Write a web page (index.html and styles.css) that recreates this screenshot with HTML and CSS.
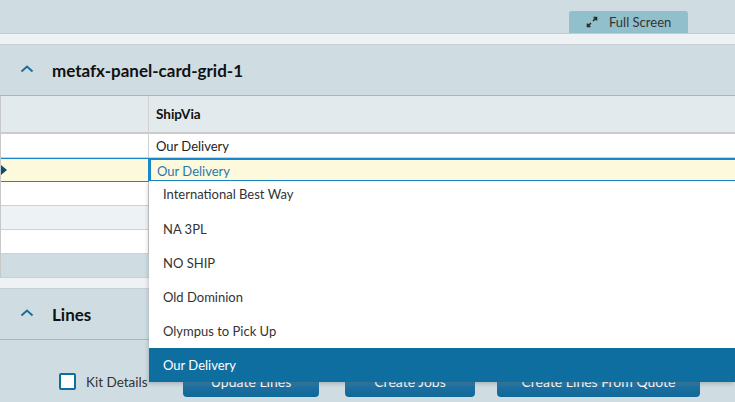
FILE: index.html
```html
<!DOCTYPE html>
<html>
<head>
<meta charset="utf-8">
<link rel="stylesheet" href="styles.css">
</head>
<body>
<div class="page">
  <div class="topbar">
    <div class="fs-btn">
      <svg class="fs-icon" width="12" height="12" viewBox="0 0 12 12">
        <path d="M7 5 L10.5 1.5 M7.5 1.5 H10.5 V4.5" fill="none" stroke="#2b2b2b" stroke-width="1.6"/>
        <path d="M5 7 L1.5 10.5 M1.5 7.5 V10.5 H4.5" fill="none" stroke="#2b2b2b" stroke-width="1.6"/>
      </svg>
      <span>Full Screen</span>
    </div>
  </div>
  <div class="strip"></div>

  <div class="panel-head">
    <svg class="chev" width="14" height="8" viewBox="0 0 14 8"><polyline points="1.5,6.5 7,1.5 12.5,6.5" fill="none" stroke="#1c6e9c" stroke-width="2"/></svg>
    <span class="title">metafx-panel-card-grid-1</span>
  </div>

  <div class="grid">
    <div class="row head">
      <div class="c0"></div>
      <div class="c1">ShipVia</div>
    </div>
    <div class="row"><div class="c0"></div><div class="c1">Our Delivery</div></div>
    <div class="row sel"><div class="c0"><span class="ind"></span></div><div class="c1">Our Delivery</div></div>
    <div class="row"><div class="c0"></div><div class="c1"></div></div>
    <div class="row alt"><div class="c0"></div><div class="c1"></div></div>
    <div class="row"><div class="c0"></div><div class="c1"></div></div>
    <div class="grid-foot"></div>
  </div>
  <div class="strip"></div>

  <div class="panel-head lines">
    <svg class="chev" width="14" height="8" viewBox="0 0 14 8"><polyline points="1.5,6.5 7,1.5 12.5,6.5" fill="none" stroke="#1c6e9c" stroke-width="2"/></svg>
    <span class="title">Lines</span>
  </div>
  <div class="lines-body">
    <label class="kit"><span class="box"></span><span>Kit Details</span></label>
    <div class="btn b1">Update Lines</div>
    <div class="btn b2">Create Jobs</div>
    <div class="btn b3">Create Lines From Quote</div>
  </div>

  <ul class="dropdown">
    <li class="first">International Best Way</li>
    <li>NA 3PL</li>
    <li>NO SHIP</li>
    <li>Old Dominion</li>
    <li>Olympus to Pick Up</li>
    <li class="active">Our Delivery</li>
  </ul>
</div>
</body>
</html>
```

FILE: styles.css
```css
html, body {
  margin: 0;
  padding: 0;
}
body {
  font-family: "Lato", "Liberation Sans", sans-serif;
  color: #222;
  background: #cfdde2;
  overflow: hidden;
}
.page {
  position: relative;
  width: 735px;
  height: 402px;
  overflow: hidden;
}
.topbar {
  height: 33px;
  background: #cfdde2;
  border-bottom: 1px solid #c4cccf;
  display: flex;
  justify-content: flex-end;
  align-items: flex-end;
  padding-right: 47px;
}
.fs-btn {
  width: 119px;
  height: 22px;
  background: #92bfcc;
  border-radius: 3px 3px 0 0;
  display: flex;
  align-items: center;
  font-size: 13px;
  color: #333;
}
.fs-icon {
  margin-left: 17px;
  margin-right: 11px;
}
.strip {
  height: 10px;
  background: #eef2f5;
  border-bottom: 1px solid #c8cfd2;
}
.panel-head {
  height: 50px;
  background: #cfdde2;
  border-bottom: 1px solid #8fbfce;
  display: flex;
  align-items: center;
}
.chev {
  margin-left: 20px;
  margin-top: -2px;
}
.title {
  font-weight: 700;
  font-size: 17px;
  color: #111;
  margin-left: 18px;
}
.grid {
  border-left: 1px solid #c8c8c8;
  background: #fff;
}
.row {
  display: flex;
  height: 23px;
  border-bottom: 1px solid #d0d0d0;
  font-size: 13px;
}
.row .c0 {
  width: 147px;
  border-right: 1px solid #d0d0d0;
  position: relative;
}
.row .c1 {
  flex: 1;
  padding-left: 7px;
  display: flex;
  align-items: center;
}
.row.head {
  height: 36px;
  border-bottom: 2px solid #cbcbcb;
  background: #e2eaed;
  font-weight: 700;
  font-size: 13.5px;
  color: #111;
}
.row.alt { background: #edf3f5; }
.row.sel {
  background: #fdf9dc;
  border-bottom: none;
  height: 24px;
}
.row.sel .c0 {
  border-top: 1px solid #1a87c9;
  border-bottom: 1px solid #1a87c9;
  border-right: 1px solid #1a87c9;
}
.row.sel .c1 {
  border: 2px solid #1a87c9;
  border-right: none;
  color: #2a78ad;
  padding-left: 6px;
  padding-top: 2px;
}
.ind {
  position: absolute;
  left: 0;
  top: 6px;
  width: 0;
  height: 0;
  border-top: 5px solid transparent;
  border-bottom: 5px solid transparent;
  border-left: 6px solid #0e4d6b;
}
.grid-foot {
  height: 23px;
  background: #cfdde2;
  border-bottom: 1px solid #c8cfd2;
}
.lines-body {
  display: flex;
  align-items: flex-start;
  padding: 33px 0 0 59px;
  height: 40px;
}
.kit {
  display: flex;
  align-items: center;
  font-size: 13.5px;
  color: #333;
  width: 124px;
}
.box {
  width: 13px;
  height: 13px;
  border: 2px solid #0f6ea0;
  background: #fff;
  border-radius: 2px;
  margin-right: 10px;
  flex: none;
}
.btn {
  height: 31px;
  margin-top: -7px;
  border-radius: 4px;
  background: linear-gradient(#9fc3d6, #1a6fa0 70%, #106898);
  color: #fff;
  font-size: 14px;
  display: flex;
  align-items: center;
  justify-content: center;
}
.b1 { width: 136px; }
.b2 { width: 130px; margin-left: 26px; }
.b3 { width: 203px; margin-left: 22px; }
.dropdown {
  position: absolute;
  left: 149px;
  top: 181px;
  width: 586px;
  margin: 0;
  padding: 0;
  list-style: none;
  background: #fff;
  box-shadow: -1px 2px 4px rgba(0,0,0,0.18);
}
.dropdown li {
  height: 34px;
  display: flex;
  align-items: center;
  padding-left: 14px;
  font-size: 13px;
  color: #333;
}
.dropdown li.first {
  height: 31px;
  align-items: flex-end;
  box-sizing: border-box;
  padding-bottom: 10px;
}
.dropdown li.active {
  background: #0f6ea0;
  color: #fff;
}
```
